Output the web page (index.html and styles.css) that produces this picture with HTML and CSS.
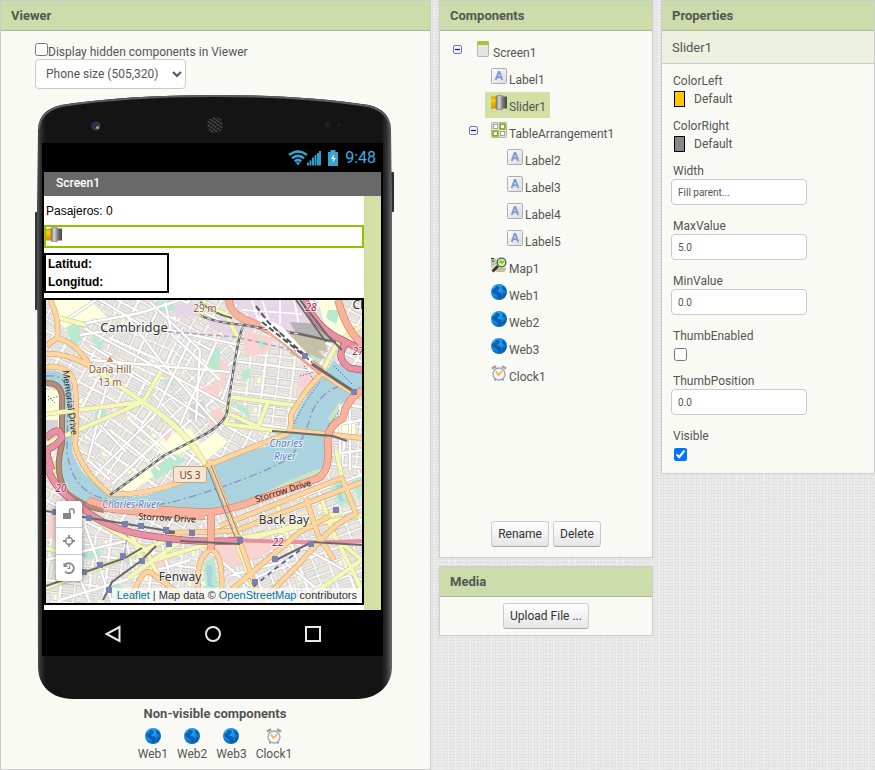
FILE: index.html
```html
<!DOCTYPE html>
<html lang="en">
<head>
<meta charset="utf-8">
<title>Designer</title>
<link rel="stylesheet" href="styles.css">
</head>
<body>
<svg class="defs" aria-hidden="true">
  <defs>
    <linearGradient id="g-tile" x1="0" y1="0" x2="1" y2="1"><stop offset="0" stop-color="#fff"/><stop offset="1" stop-color="#d9d9e0"/></linearGradient>
    <radialGradient id="g-web" cx=".35" cy=".3" r=".8"><stop offset="0" stop-color="#3fb4ff"/><stop offset=".6" stop-color="#0b83dc"/><stop offset="1" stop-color="#0457a8"/></radialGradient>
    <linearGradient id="g-thumb"><stop offset="0" stop-color="#777"/><stop offset=".45" stop-color="#d4d4d4"/><stop offset="1" stop-color="#777"/></linearGradient>
    <linearGradient id="g-yellow" x1="0" y1="0" x2="0" y2="1"><stop offset="0" stop-color="#e09c00"/><stop offset=".3" stop-color="#ffc90a"/><stop offset="1" stop-color="#d99200"/></linearGradient>
    <linearGradient id="g-dark"><stop offset="0" stop-color="#8a8a8a"/><stop offset="1" stop-color="#444"/></linearGradient>
  </defs>
  <symbol id="i-screen" viewBox="0 0 16 16"><rect x="2.500" y=".5" width="11" height="15" rx="1" fill="#e4e4e4" stroke="#b5b5b5"/><path d="M2 1.500Q2 0 3.500 0h9Q14 0 14 1.500V4H2z" fill="#a5c63b"/></symbol>
  <symbol id="i-label" viewBox="0 0 16 16"><rect x=".5" y=".5" width="15" height="15" rx="1" fill="url(#g-tile)" stroke="#aeaeae"/><path d="M4.700 12 7.600 4h.8l2.900 8M6 9.300h4" fill="none" stroke="#7b9fd4" stroke-width="2"/></symbol>
  <symbol id="i-slider" viewBox="0 0 16 16"><rect y="1.500" width="6" height="12" fill="url(#g-yellow)"/><rect x="10" y="1.500" width="6" height="12" fill="url(#g-dark)"/><rect x="5" y=".5" width="7" height="14" rx="1.500" fill="url(#g-thumb)" stroke="#777" stroke-width=".6"/></symbol>
  <symbol id="i-table" viewBox="0 0 16 16"><rect x=".5" y=".5" width="15" height="15" rx="1" fill="#dedede" stroke="#b4b4b4"/><path d="M8 1h7v7H8zM1 8h7v7H1z" fill="#a5c63b"/><g fill="#fff" stroke="#a5a5a5"><rect x="2.500" y="2.500" width="4" height="4"/><rect x="9.500" y="2.500" width="4" height="4" stroke="#88a832"/><rect x="2.500" y="9.500" width="4" height="4" stroke="#88a832"/><rect x="9.500" y="9.500" width="4" height="4"/></g></symbol>
  <symbol id="i-map" viewBox="0 0 16 16"><path d="M0 1h15v10l-2 4H5L0 11z" fill="#dfe5d2"/><path d="M0 1l5 1 1 5-6 3z" fill="#bcc4ae"/><path d="M5 11h10v2l-2 2H6z" fill="#b9c29b"/><path d="M0 1.500h3M1 4h2" stroke="#333"/><circle cx="10.500" cy="5.500" r="4.300" fill="#d6f2b8" stroke="#4e5a46" stroke-width="1.300"/><path d="M8 6l2-2 1 2 2-2" stroke="#6cc024" stroke-width="1.400" fill="none"/><path d="M7 9 1.500 14.500" stroke="#4c3314" stroke-width="3"/></symbol>
  <symbol id="i-web" viewBox="0 0 16 16"><circle cx="8" cy="8" r="8" fill="url(#g-web)"/><path d="M5 1.500 9 3l-1 3-2 1 4 2 1 3-3 3-2-4-4-2-1-3 3-2zM11 2l3 2 1 3-3-1zM12 9l3 1-3 4z" fill="#0550a4" opacity=".8"/></symbol>
  <symbol id="i-clock" viewBox="0 0 16 16"><path d="M1 3.500 5 1.200M15 3.500 11 1.200" stroke="#9a9a9a" stroke-width="2.400"/><path d="M3.500 15.500 5 13.500M12.500 15.500 11 13.500" stroke="#8a8a8a" stroke-width="1.600"/><circle cx="8" cy="9" r="6" fill="#f5f5f7" stroke="#a5a5a8" stroke-width="1.300"/><path d="M4.800 6.500 7.500 10l3.800-4" fill="none" stroke="#f0b04e" stroke-width="1.600"/></symbol>
  <symbol id="i-minus" viewBox="0 0 9 9"><rect x=".5" y=".5" width="8" height="8" rx="1.500" fill="#f4f5fb" stroke="#6a77b0"/><path d="M2 4.500h5" stroke="#1010a0" stroke-width="1.200"/></symbol>
</svg>
<main class="workspace">
  <section class="panel viewer">
    <h2 class="panel-title">Viewer</h2>
    <div class="viewer-body">
      <label class="hidden-toggle"><input type="checkbox" class="box">Display hidden components in Viewer</label>
      <select class="size-select" aria-label="Screen size"><option>Phone size (505,320)</option></select>
      <div class="phone">
        <svg class="phone-shell" viewBox="0 0 360 604" preserveAspectRatio="none" aria-hidden="true">
          <defs>
            <linearGradient id="g-edge"><stop offset="0" stop-color="#555759"/><stop offset=".012" stop-color="#2a2a2b"/><stop offset=".025" stop-color="#141414"/><stop offset=".97" stop-color="#141414"/><stop offset=".985" stop-color="#303032"/><stop offset="1" stop-color="#6a6b6e"/></linearGradient>
            <pattern id="p-grille" width="3" height="3" patternUnits="userSpaceOnUse" patternTransform="rotate(35)"><rect width="3" height="3" fill="#1c1c1c"/><rect width="2" height="1" fill="#666"/></pattern>
          </defs>
          <rect y="117" width="5" height="98" rx="1" fill="#333436"/>
          <rect x="354" y="77" width="5" height="40" rx="1" fill="#2a2b2d"/>
          <path d="M3 34Q4 15 26 10Q90 0 180 0Q268 0 334 10Q355 15 356 34L357 110V572C357 590 343 604 322 604H38C16 604 3 590 3 572L2 110Z" fill="url(#g-edge)"/>
          <path d="M4 34Q5 16 27 11Q90 1 180 1Q268 1 333 11Q354 16 355 34" fill="none" stroke="#5c5d60" stroke-width="2"/>
          <circle cx="61" cy="31" r="4.500" fill="#3c3d42"/><circle cx="60.500" cy="30" r="3" fill="#2b2a50"/><circle cx="62.500" cy="32.500" r="1.500" fill="#a5a5a5"/>
          <circle cx="180" cy="30" r="8" fill="url(#p-grille)"/>
          <circle cx="292" cy="30" r="3" fill="#1f1f1f"/><circle cx="304" cy="30" r="2" fill="#1f1f1f"/>
        </svg>
        <div class="phone-screen">
          <div class="status-bar">
            <svg class="status-icons" viewBox="0 0 50 16" aria-hidden="true">
              <g fill="none" stroke="#33a5cf" stroke-width="2.600"><path d="M1 5Q10-2 19 5"/><path d="M4 8.300Q10 3.500 16 8.300"/><path d="M6.700 11.200Q10 8.700 13.300 11.200"/></g>
              <path d="M7.500 12.300h5L10 15.500z" fill="#33a5cf"/>
              <path d="M20 15.500v-3M22.500 15.500v-5M25 15.500v-8M27.500 15.500V5M30 15.500V3M32 15.500V1" stroke="#33a5cf" stroke-width="1.900"/>
              <path d="M40 2h2.500V0h5v2H50v14H40z" fill="#33a5cf"/><path d="M46 4l-3 5h2.500l-1.200 4 3.500-5h-2.300z" fill="#fff"/>
            </svg>
            <span>9:48</span>
          </div>
          <div class="app">
            <div class="title-bar">Screen1</div>
            <div class="app-row">
              <div class="app-form">
                <div class="pasajeros">Pasajeros: 0</div>
                <div class="slider-mock"><svg class="icon"><use href="#i-slider"/></svg></div>
                <div class="arrangement"><span>Latitud:</span><span>Longitud:</span></div>
                <div class="map">
                  <svg class="map-tiles" viewBox="46 300 316 303" preserveAspectRatio="xMidYMid slice">
                    <defs>
                      <g id="blocks">
                        <rect width="44" height="30" fill="#fff"/>
                        <g stroke="#c4c0c0" stroke-width=".8" fill="#ece8e0">
                          <rect x="1.500" y="1.500" width="11" height="3.500"/><rect x="1.500" y="7" width="11" height="3.500"/><rect x="1.500" y="12.500" width="11" height="6" fill="#e9e4dc"/><rect x="1.500" y="21" width="11" height="7"/>
                          <rect x="15" y="1.500" width="5" height="9"/><rect x="22" y="1.500" width="5" height="9"/><rect x="15" y="12.500" width="12" height="6"/><rect x="15" y="21" width="12" height="3"/><rect x="15" y="26" width="12" height="2.500" fill="#fdfbd8"/>
                          <rect x="30" y="1.500" width="12" height="3.500"/><rect x="30" y="7" width="12" height="3.500"/><rect x="30" y="12.500" width="5" height="16"/><rect x="37" y="12.500" width="5" height="7" fill="#fdfbd8"/><rect x="37" y="22" width="5" height="6.500"/>
                        </g>
                      </g>
                      <pattern id="p-a" width="44" height="30" patternUnits="userSpaceOnUse" patternTransform="rotate(28)"><use href="#blocks"/></pattern>
                      <pattern id="p-b" width="44" height="30" patternUnits="userSpaceOnUse" patternTransform="rotate(-55)"><use href="#blocks"/></pattern>
                      <pattern id="p-c" width="44" height="30" patternUnits="userSpaceOnUse" patternTransform="rotate(7)"><use href="#blocks"/></pattern>
                      <pattern id="p-d" width="44" height="30" patternUnits="userSpaceOnUse" patternTransform="rotate(-20)"><use href="#blocks"/></pattern>
                      <pattern id="p-e" width="44" height="30" patternUnits="userSpaceOnUse" patternTransform="rotate(48)"><use href="#blocks"/></pattern>
                      <pattern id="p-f" width="44" height="30" patternUnits="userSpaceOnUse" patternTransform="rotate(-66)"><use href="#blocks"/></pattern>
                      <path id="r-river" d="M46 371Q68 368 72 388V450Q78 475 104 490Q116 498 145 496Q180 484 210 468Q240 452 268 446Q288 438 292 424Q304 396 320 380L334 360Q346 374 362 372V394Q346 398 334 410Q326 428 328 452Q328 472 316 478L236 508Q200 518 104 508Q66 502 62 470L64 398Q60 380 46 380Z"/>
                      <g id="r-street" fill="none"><path d="M76 325L140 313 180 300M80 335L145 325 240 345M84 328L240 412M90 345L205 418M88 376L110 372 88 460 110 480M92 360L230 372M165 302L172 335 220 380M128 318L160 360 222 430M150 302L200 350 196 420M190 340L152 420M240 350L222 400M110 430L160 470M130 420L176 460M100 470L160 410M112 484L176 424M66 320L96 300M100 300L150 330M215 345L180 425M126 452L100 425M60 530L90 603M84 522L112 603M124 530L140 603M160 536L176 603M46 560L130 540M60 600L190 560M220 560L270 603M232 575L290 560M270 550L330 600M290 540L362 580M340 400V470M350 396V470M330 455L362 450M335 425L362 420"/></g>
                      <g id="r-pike" fill="none"><path d="M46 464Q54 490 80 506Q106 530 150 536Q200 544 242 540"/><path d="M305 300Q314 325 338 338L362 350M346 343Q334 358 350 368L362 370M46 438Q60 424 62 438Q56 446 50 448T52 470"/></g>
                      <g id="r-trunk" fill="none"><path d="M229 300Q230 314 248 321Q280 333 300 354L322 372"/><path d="M338 300Q346 330 362 344"/><path d="M362 390Q346 400 343 418Q325 428 328 446Q330 474 316 479L262 498Q220 514 200 512L150 509Q112 510 88 500M104 508Q150 514 205 516M211 514V550"/></g>
                      <g id="r-primary" fill="none"><path d="M50 300Q60 318 57 338Q76 342 90 366M57 338L46 346M46 354Q64 352 90 366M46 367Q70 364 75 385Q78 420 75 445Q82 472 110 494Q140 496 175 484Q195 478 209 465Q250 448 287 434Q292 428 291 415Q302 394 322 373L335 382L362 398M209 460L236 530L256 588L262 603M165 533L235 531L305 504L362 482M220 526L342 478L356 514Q336 520 300 563L260 603M216 603L300 532L330 516M306 498L318 535L334 560M211 549Q192 560 200 603M211 549Q226 556 220 603M287 430L362 438M130 603Q140 570 150 572Q170 586 190 603"/></g>
                      <g id="r-second" fill="none"><path d="M46 414L143 402L46 444M143 402L161 371M90 366L143 402Q190 432 204 462M143 402Q184 428 209 470M60 318L85 325M230 397L300 406M230 398L226 424L285 432M230 414L258 427L268 402M340 338L322 372M362 326L340 340M200 305L226 314L240 342M205 300L200 320M46 588L125 558L176 536M128 578L182 540M102 524L146 550L160 580M130 530L142 561M238 545L254 590M155 560L200 546L362 515M245 541L300 524L342 512M277 505L290 545M322 500L332 530L362 590M333 536L362 560L300 603M336 450L342 478M46 548L60 552M46 456Q60 466 48 480"/></g>
                    </defs>
                    <rect x="46" y="300" width="316" height="303" fill="url(#p-a)"/>
                    <path d="M100 345L160 300L185 330L160 390Z" fill="url(#p-f)"/>
                    <path d="M145 402L240 330L225 425L200 460Z" fill="url(#p-e)"/>
                    <path d="M78 420L143 403L205 460L170 484L110 494Z" fill="url(#p-b)"/>
                    <path d="M238 335L300 352L322 374L290 430L226 425Z" fill="url(#p-c)"/>
                    <path d="M200 520L362 465V603H240Z" fill="url(#p-d)"/>
                    <path d="M46 530L200 540L190 603H46Z" fill="url(#p-c)"/>
                    <path d="M330 395H362V470H328Z" fill="url(#p-c)"/>
                    <g fill="#feffde"><path d="M46 300h16l30 20-28 8zM62 300h28l20 20-26-2zM318 300h20l24 40v10l-36-20zM190 452l26-20 12 10-24 20zM46 390h14v40H46zM335 420h20v18h-20zM150 442l40-14 10 16-32 14zM120 486l40-30 8 10-40 28z"/></g>
                    <g fill="#e6d6e7"><path d="M232 300h74l22 50-40-10-34-20zM165 306l34-4v14l-22 2zM206 318l34 8v14l-30-12z"/></g>
                    <path d="M252 300l6 20M262 300l8 24M242 310l60 4M280 300v24M294 300l6 30" stroke="#fff" stroke-width="1.600"/>
                    <g fill="#f8d3cf"><path d="M205 415l16-8 6 14-14 8zM198 390l22-10-2 20zM244 330l30 8-8 16-22 2zM206 548l60-12 10 14-44 18zM224 398l4-34-14-10zM302 370l14 6-6 20-12-6zM148 556l20-4 4 16-18 6zM165 480h16l-6 8zM160 430l12 4-6 8zM344 376l18 4v8l-14 2zM50 515l30 8-20 20-14-8z"/></g>
                    <g fill="#c5c1a9"><path d="M290 344h20l16 14-14 4-22-8zM284 330l40 10 4 12-36-6z"/></g><path d="M290 322l30 2 10 14-34-4z" fill="#b5b3b3"/>
                    <g fill="#b9ead0"><path d="M66 328l12-8 4 20-10 6zM210 352l10-6v20l-12 2zM242 372l8-4v10l-8 2zM155 302l16-2 4 10-18 2zM328 310l12 0-4 14-10-6zM208 362l10 2-2 10zM90 336l14 6-4 10zM331 486l14-8 8 24-14 4zM352 480l10-4v20l-4 4zM66 462l16 10 30 24-20-4zM150 470l24-16 12 6-30 20zM204 563l10-6 4 30-12 4zM84 550l14-6 4 12-14 4zM94 412l12-4v14l-10 2zM230 400l18 8 2 12zM328 410l10-12-2 16zM162 382l10-4 2 8zM255 338l12 4-4 8zM108 586l12-2 4 14h-14zM310 354l12 6-8 8z"/></g>
                    <g fill="#d9d1dc"><path d="M188 406l16-6 4 16-18 4zM235 415l20 12h-20zM46 420h12v30H46zM118 552l14 4-4 10z"/></g>
                    <use href="#r-street" stroke="#c4c0c0" stroke-width="3.400"/><use href="#r-street" stroke="#fff" stroke-width="2.400"/>
                    <use href="#r-river" fill="#aad3df"/>
                    <path d="M262 494Q300 474 322 468L318 478L262 498ZM328 418L342 398L332 430Z" fill="#c8e6c0"/>
                    <path d="M336 486q8-4 6 6t6 8l-8 2zM206 566q8-4 6 8t4 14l-8-2zM80 553l8 0-2 6z" fill="#aad3df"/>
                    <g fill="none" stroke="#2a3fe0" stroke-width="1" stroke-dasharray="1 2"><path d="M304 366l10 14M294 424q10-22 26-42M48 396l8 8M48 400l10-4M150 462l10-8M334 366l18 18M328 426l12-16M300 376l14-4"/></g>
                    <path d="M46 376Q68 374 68 396L67 450Q70 485 96 496Q140 512 180 500Q250 480 290 458Q304 440 312 412Q322 390 346 384" fill="none" stroke="#8f8fb8" stroke-width="1.300" stroke-dasharray="8 3 2 3"/>
                    <path d="M46 383Q64 382 62 404V444Q54 472 66 492Q80 506 104 510" fill="none" stroke="#8d7a55" stroke-width="6"/><path d="M46 383Q64 382 62 404V444Q54 472 66 492Q80 506 104 510" fill="none" stroke="#b98b7c" stroke-width="4"/>
                    <g stroke-linejoin="round">
                      <use href="#r-second" stroke="#c3c68e" stroke-width="5"/><use href="#r-second" stroke="#f5f8b9" stroke-width="4"/>
                      <path d="M240 540Q300 544 362 541" fill="none" stroke="#e792a2" stroke-width="4"/>
                      <use href="#r-primary" stroke="#cf9d55" stroke-width="5.500"/><use href="#r-primary" stroke="#fcd5a2" stroke-width="4.500"/>
                      <use href="#r-pike" stroke="#a8385c" stroke-width="7"/><use href="#r-pike" stroke="#e792a2" stroke-width="6"/>
                      <use href="#r-trunk" stroke="#d0705a" stroke-width="7.500"/><use href="#r-trunk" stroke="#f9b29c" stroke-width="6.500"/>
                    </g>
                    <g fill="none" stroke="#6a6a6a"><path d="M200 315Q212 322 243 325L300 334 336 342M243 327Q238 334 227 413Q222 426 200 437L165 455L110 495" stroke-width="2.500"/><path d="M200 302Q214 314 232 318M300 300l28 36 14 14M296 300l30 42" stroke-width="2"/><path d="M312 364l44 29" stroke-width="3"/><path d="M272 431L333 436L347 441" stroke-width="2"/><path d="M46 511L90 518L175 532M46 586L125 558L142 548M103 600L112 582L142 560L156 546M165 533H175M276 560L312 542L362 545M180 541l60 3" stroke-width="2"/><path d="M207 467l28 70M211 465l28 70" stroke-width=".8"/></g>
                    <g fill="none" stroke="#fff" stroke-dasharray="4 4"><path d="M200 315Q212 322 243 325L300 334M243 327Q238 334 227 413Q222 426 200 437L165 455L110 495"/></g>
                    <path d="M258 318L280 328L306 356M262 322L312 362" fill="none" stroke="#fff" stroke-width="5"/><path d="M256 306L268 322L306 356M262 322L312 362" fill="none" stroke="#555" stroke-width="2" stroke-dasharray="6 3"/>
                    <g stroke="#bb9cc0" stroke-width="1.500" stroke-dasharray="5 3" fill="none"><path d="M160 331l76 6 60 14M128 532l-4 24"/></g>
                    <path d="M300 550l-24 18-24 20" fill="none" stroke="#555fa8" stroke-width="1.800" stroke-dasharray="5 4"/>
                    <g fill="#7880b4"><path d="M52 509h6v6h-6zM86 515h6v6h-6zM122 521h6v6h-6zM138 523h6v6h-6zM163 527h6v6h-6zM189 530h6v6h-6zM166 541h6v6h-6zM97 562h6v6h-6zM120 553h6v6h-6zM139 558h6v6h-6zM81 569h6v6h-6zM106 587h6v6h-6zM237 537h6v6h-6zM272 556h6v6h-6zM252 579h6v6h-6zM333 507h6v6h-6zM308 541h6v6h-6zM302 353h6v6h-6zM351 389h6v6h-6z"/></g>
                    <rect x="173.500" y="466.500" width="33" height="16" rx="2" fill="#f6e5d2" stroke="#c6a483"/>
                    <path d="M110 356l3.500 6h-7z" fill="#d08f55"/>
                    <g class="map-text">
                      <text class="place" x="134" y="332">Cambridge</text>
                      <text class="place small" x="284" y="524">Back Bay</text>
                      <text class="place small" x="180" y="581">Fenway</text>
                      <text class="place small faint" x="303" y="597">South End</text>
                      <text class="place small" x="360" y="309">Ch</text>
                      <text class="peak" x="110" y="373">Dana Hill</text><text class="peak" x="110" y="386">13 m</text><text class="peak" x="205" y="312">29 m</text>
                      <text class="water" x="286" y="447">Charles</text><text class="water" x="285" y="460">River</text><text class="water" x="131" y="508">Charles River</text>
                      <text class="exit" x="311" y="311">28</text><text class="exit" x="358" y="355">27</text><text class="exit" x="61" y="492">20</text><text class="exit" x="278" y="546">22</text>
                      <text class="shield" x="190" y="479">US 3</text>
                      <text class="road" transform="translate(67 403) rotate(82)">Memorial Drive</text>
                      <text class="road" transform="translate(167 521) rotate(3)">Storrow Drive</text>
                      <text class="road" transform="translate(284 494) rotate(-17)">Storrow Drive</text>
                    </g>
                  </svg>
                  <div class="map-controls">
                    <button type="button" aria-label="Unlock"><svg viewBox="0 0 14 14"><path d="M1 6h8v6H1z" fill="#888"/><path d="M7.500 6V4a2.200 2.200 0 0 1 4.400 0v2.500" fill="none" stroke="#888" stroke-width="1.500"/></svg></button>
                    <button type="button" aria-label="Center"><svg viewBox="0 0 14 14"><circle cx="7" cy="7" r="3.500" fill="none" stroke="#888" stroke-width="1.500"/><path d="M7 1v3.500M7 9.500V13M1 7h3.500M9.500 7H13" stroke="#888" stroke-width="1.800"/></svg></button>
                    <button type="button" aria-label="Reset"><svg viewBox="0 0 14 14"><path d="M3 4a5 5 0 1 1 0 6.500" fill="none" stroke="#888" stroke-width="1.800"/><path d="M1.500 1.500v4.500H6z" fill="#888"/><path d="M7.500 4.500v3H5.500" fill="none" stroke="#888" stroke-width="1.200"/></svg></button>
                  </div>
                  <div class="attribution"><a href="#">Leaflet</a> | Map data © <a href="#">OpenStreetMap</a> contributors</div>
                </div>
              </div>
              <div class="app-gutter"></div>
            </div>
          </div>
          <div class="nav-bar">
            <svg viewBox="0 0 18 18"><path d="M15.500 2v14L2.500 9z"/></svg>
            <svg viewBox="0 0 18 18"><circle cx="9" cy="9" r="7"/></svg>
            <svg viewBox="0 0 18 18"><rect x="2" y="2" width="14" height="14"/></svg>
          </div>
        </div>
      </div>
      <div class="nonvisible">
        <h3>Non-visible components</h3>
        <ul>
          <li><svg class="icon"><use href="#i-web"/></svg>Web1</li>
          <li><svg class="icon"><use href="#i-web"/></svg>Web2</li>
          <li><svg class="icon"><use href="#i-web"/></svg>Web3</li>
          <li><svg class="icon"><use href="#i-clock"/></svg>Clock1</li>
        </ul>
      </div>
    </div>
  </section>

  <div class="column">
    <section class="panel">
      <h2 class="panel-title">Components</h2>
      <ul class="tree">
        <li><div class="node"><button type="button" class="toggle" aria-label="Collapse Screen1"><svg><use href="#i-minus"/></svg></button><span class="item"><svg class="icon"><use href="#i-screen"/></svg>Screen1</span></div>
          <ul>
            <li><div class="node leaf"><span class="item"><svg class="icon"><use href="#i-label"/></svg>Label1</span></div></li>
            <li><div class="node leaf"><span class="item selected"><svg class="icon"><use href="#i-slider"/></svg>Slider1</span></div></li>
            <li><div class="node"><button type="button" class="toggle" aria-label="Collapse TableArrangement1"><svg><use href="#i-minus"/></svg></button><span class="item"><svg class="icon"><use href="#i-table"/></svg>TableArrangement1</span></div>
              <ul>
                <li><div class="node leaf"><span class="item"><svg class="icon"><use href="#i-label"/></svg>Label2</span></div></li>
                <li><div class="node leaf"><span class="item"><svg class="icon"><use href="#i-label"/></svg>Label3</span></div></li>
                <li><div class="node leaf"><span class="item"><svg class="icon"><use href="#i-label"/></svg>Label4</span></div></li>
                <li><div class="node leaf"><span class="item"><svg class="icon"><use href="#i-label"/></svg>Label5</span></div></li>
              </ul>
            </li>
            <li><div class="node leaf"><span class="item"><svg class="icon"><use href="#i-map"/></svg>Map1</span></div></li>
            <li><div class="node leaf"><span class="item"><svg class="icon"><use href="#i-web"/></svg>Web1</span></div></li>
            <li><div class="node leaf"><span class="item"><svg class="icon"><use href="#i-web"/></svg>Web2</span></div></li>
            <li><div class="node leaf"><span class="item"><svg class="icon"><use href="#i-web"/></svg>Web3</span></div></li>
            <li><div class="node leaf"><span class="item"><svg class="icon"><use href="#i-clock"/></svg>Clock1</span></div></li>
          </ul>
        </li>
      </ul>
      <div class="actions"><button type="button" class="btn">Rename</button><button type="button" class="btn">Delete</button></div>
    </section>
    <section class="panel">
      <h2 class="panel-title">Media</h2>
      <div class="actions upload"><button type="button" class="btn">Upload File ...</button></div>
    </section>
  </div>

  <section class="panel">
    <h2 class="panel-title">Properties</h2>
    <div class="subject">Slider1</div>
    <div class="props">
      <div class="prop"><span>ColorLeft</span><button type="button" class="color"><i class="swatch yellow"></i>Default</button></div>
      <div class="prop"><span>ColorRight</span><button type="button" class="color"><i class="swatch gray"></i>Default</button></div>
      <div class="prop"><label for="width">Width</label><input id="width" class="field" type="text" value="Fill parent..."></div>
      <div class="prop"><label for="max">MaxValue</label><input id="max" class="field" type="text" value="5.0"></div>
      <div class="prop"><label for="min">MinValue</label><input id="min" class="field" type="text" value="0.0"></div>
      <div class="prop"><label for="enabled">ThumbEnabled</label><input id="enabled" class="box" type="checkbox"></div>
      <div class="prop"><label for="position">ThumbPosition</label><input id="position" class="field" type="text" value="0.0"></div>
      <div class="prop"><label for="visible">Visible</label><input id="visible" class="box" type="checkbox" checked></div>
    </div>
  </section>
</main>
</body>
</html>
```
FILE: styles.css
```css
* { box-sizing: border-box; }
body {
  margin: 0;
  min-height: 100vh;
  color: #555;
  font: 12px/18px Roboto, "Liberation Sans", sans-serif;
  background-color: #ebebeb;
  background-image:
    repeating-linear-gradient(90deg, #dedede88 0 1px, transparent 1px 3px),
    repeating-linear-gradient(0deg, #d8d8d888 0 1px, transparent 1px 3px),
    repeating-linear-gradient(90deg, #f6f6f688 0 2px, transparent 2px 7px);
}
ul { list-style: none; margin: 0; padding: 0; }
button, input, select { font-family: inherit; color: inherit; }
.defs { position: absolute; width: 0; height: 0; }
.icon { display: block; flex: none; width: 16px; height: 16px; }

.workspace {
  display: grid;
  grid-template-columns: 1fr 214px 214px;
  gap: 8px;
  align-items: start;
  min-height: 100vh;
}
.column { display: grid; gap: 8px; }
.panel { background: #f9faf3; border: 1px solid #ccc; }
.viewer { align-self: stretch; }
.panel-title {
  margin: 0;
  padding: 0 10px;
  height: 30px;
  font-size: 13px;
  line-height: 30px;
  font-weight: 700;
  background: #ccdcaa;
  border-bottom: 1px solid #afb3a5;
}

.viewer-body { width: 394px; padding: 12px 0 0 34px; }
.hidden-toggle { display: flex; height: 16px; line-height: 18px; }
.box { flex: none; width: 13px; height: 13px; margin: 0; }
.size-select {
  display: block;
  height: 30px;
  padding: 0 10px 0 6px;
  font-size: 12px;
  background: #fff;
  border: 1px solid #ccc;
  border-radius: 4px;
}
.phone { position: relative; margin-top: 6px; padding: 48px 12px 43px 7px; }
.phone-shell { position: absolute; inset: 0; width: 100%; height: 100%; }
.phone-screen { position: relative; padding: 0 2px; background: #000; }
.status-bar {
  display: flex;
  align-items: center;
  justify-content: flex-end;
  gap: 7px;
  height: 29px;
  padding-right: 5px;
  color: #33b5e5;
  font-size: 16px;
}
.status-icons { width: 50px; height: 16px; }
.title-bar { height: 24px; padding-left: 12px; line-height: 22px; font-weight: 500; color: #fff; background: #696969; }
.app-row { display: flex; }
.app-form {
  flex: 1;
  padding: 5px 0;
  background: #fff;
  color: #000;
  font: 12px/18px "Liberation Sans", Arial, sans-serif;
}
.app-gutter { width: 17px; background: #d2e0a6; }
.pasajeros { padding: 1px 2px 0; height: 24px; }
.slider-mock { height: 23px; border: 2px solid #92c100; }
.arrangement { display: grid; width: 125px; height: 40px; margin: 5px 0; padding: 0 2px; border: 2px solid #000; font-weight: 700; }
.map { position: relative; border: 2px solid #000; }
.map-tiles { display: block; width: 100%; height: 303px; }
.map-text { font-family: "Noto Sans", sans-serif; text-anchor: middle; paint-order: stroke; stroke-linejoin: round; stroke: #ffffffaa; stroke-width: 2px; }
.place { font-size: 13px; fill: #333; }
.small { font-size: 12px; }
.faint { opacity: .4; }
.peak { font-size: 10px; fill: #8b5a35; }
.water { font-size: 10px; font-style: italic; fill: #5a86c4; }
.exit { font-size: 10px; font-style: italic; fill: #a02040; }
.shield { font-size: 10px; fill: #6a4a2a; stroke: none; }
.road { font-size: 9px; fill: #2b1c14; stroke: none; }
.map-controls {
  position: absolute;
  left: 10px;
  bottom: 22px;
  border-radius: 4px;
  overflow: hidden;
  background: #fff;
  box-shadow: 0 1px 5px #00000066;
}
.map-controls button { display: grid; place-items: center; width: 26px; height: 27px; padding: 0; border: 0; border-bottom: 1px solid #ccc; background: #fff; }
.map-controls button:last-child { height: 26px; border-bottom: 0; }
.map-controls svg { width: 14px; height: 14px; }
.attribution { position: absolute; right: 0; bottom: 0; padding: 0 5px; color: #333; background: #ffffffb3; font-size: 11px; line-height: 15px; white-space: nowrap; }
.attribution a { color: #0078a8; text-decoration: none; }
.nav-bar { display: flex; justify-content: space-between; align-items: center; height: 46px; padding: 2px 59px 0 60px; }
.nav-bar svg { width: 18px; height: 18px; fill: none; stroke: #e8e8e8; stroke-width: 2; }

.nonvisible { padding-top: 6px; text-align: center; }
.nonvisible h3 { margin: 0; font-size: 13px; line-height: 18px; }
.nonvisible ul { display: flex; justify-content: center; gap: 9px; padding-top: 5px; }
.nonvisible li { display: grid; justify-items: center; line-height: 20px; }

.tree { min-height: 490px; padding: 7px 0 0 13px; }
.tree ul { padding-left: 16px; }
.node { display: flex; height: 27px; }
.leaf { padding-left: 16px; }
.toggle { display: flex; align-items: flex-start; width: 16px; height: 16px; margin-top: 7px; padding: 0; border: 0; background: none; }
.toggle svg { display: block; width: 9px; height: 9px; }
.item { display: flex; gap: 2px; height: 26px; padding: 4px 4px 0 6px; line-height: 22px; }
.item .icon { margin-top: -1px; }
.selected { background: #d2e0a6; }
.actions { display: flex; justify-content: center; gap: 4px; padding: 0 0 10px; }
.upload { padding: 6px; }
.btn {
  height: 26px;
  padding: 0 6px;
  font-size: 12px;
  color: #333;
  background: linear-gradient(#fff, #e6e6e6);
  border: 1px solid #ccc;
  border-bottom-color: #aaa;
  border-radius: 3px;
}

.subject { height: 33px; padding: 0 10px; line-height: 34px; font-size: 13px; background: #edf1df; border-bottom: 1px solid #ccc; }
.props { display: grid; gap: 9px; padding: 7px 11px 11px 9px; }
.prop { display: grid; justify-items: start; }
.prop > label, .prop > span { height: 18px; padding-left: 2px; line-height: 20px; }
.prop .box { margin: 4px 3px 1px; }
.field { width: 136px; max-width: 100%; height: 26px; margin-bottom: 2px; padding: 0 6px; font-size: 10px; background: #fff; border: 1px solid #ccc; border-radius: 4px; }
.color { display: flex; gap: 9px; height: 18px; padding: 0 3px; border: 0; background: none; font-size: 12px; line-height: 20px; }
.swatch { width: 11px; height: 16px; margin-top: 2px; border: 1px solid #000; }
.yellow { background: #ffc800; }
.gray { background: #888; }
```
